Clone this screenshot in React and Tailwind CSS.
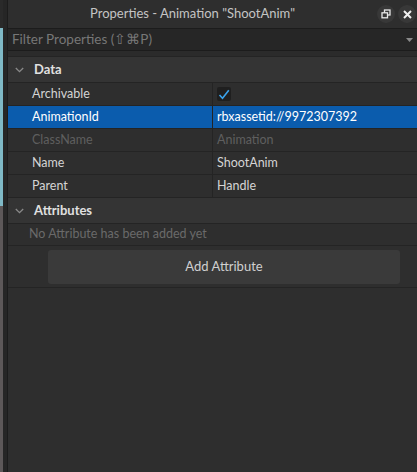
import React from "react";

const rows = [
  { name: "Archivable", check: true },
  { name: "AnimationId", value: "rbxassetid://9972307392", selected: true },
  { name: "ClassName", value: "Animation", disabled: true },
  { name: "Name", value: "ShootAnim" },
  { name: "Parent", value: "Handle" },
];

const Chevron = () => (
  <svg width="9" height="6" viewBox="0 0 9 6" className="ml-[7px] mr-[10px]">
    <path d="M0.8 1 L4.5 4.7 L8.2 1" stroke="#8a8a8a" strokeWidth="1.3" fill="none" />
  </svg>
);

const SectionHeader = ({ title }) => (
  <div className="flex h-[26px] items-center border-b border-[#242424] bg-[#343434]">
    <Chevron />
    <span className="text-[13px] font-bold text-[#e0e0e0]">{title}</span>
  </div>
);

const PropRow = ({ row }) => {
  const tone = row.disabled ? "text-[#5f5f5f]" : row.selected ? "text-white" : "text-[#d4d4d4]";
  return (
    <div
      className={
        "flex h-[23px] items-center border-b border-[#242424] text-[12.5px] " +
        (row.selected ? "bg-[#0b5cad]" : "bg-[#2e2e2e]")
      }
    >
      <div className={"flex h-full w-[204px] items-center pl-[24px] " + tone}>{row.name}</div>
      <div className="h-full w-px bg-[#242424]" />
      <div className={"flex h-full flex-1 items-center pl-[4px] " + tone}>
        {row.check ? (
          <div className="flex h-[14px] w-[14px] items-center justify-center rounded-[2px] bg-[#1f1f1f]">
            <svg width="12" height="11" viewBox="0 0 12 11">
              <path d="M1.5 6 L4.5 9.2 L10.8 1.2" stroke="#3aa3ec" strokeWidth="1.6" fill="none" />
            </svg>
          </div>
        ) : (
          row.value
        )}
      </div>
    </div>
  );
};

export default function App() {
  return (
    <div
      className="flex h-[472px] w-[417px] overflow-hidden bg-[#2e2e2e]"
      style={{ fontFamily: "Lato, 'Noto Sans', sans-serif" }}
    >
      <div className="flex w-[3px] flex-col">
        <div className="h-[28px] bg-[#2a2a2a]" />
        <div className="h-[178px] bg-[#7fb9c6]" />
        <div className="flex-1 bg-[#5d5859]" />
      </div>
      <div className="w-[4px] bg-[#262626]" />
      <div className="w-px bg-[#1c1c1c]" />
      <div className="flex flex-1 flex-col">
        <div className="relative flex h-[28px] items-center justify-center bg-[#2e2e2e] pr-[40px]">
          <span className="text-[13px] text-[#c4c4c4]">Properties - Animation "ShootAnim"</span>
          <div className="absolute right-[1px] top-[5px] flex items-center gap-[3px]">
            <div className="flex h-[18px] w-[18px] items-center justify-center rounded-full bg-[#383838]">
              <svg width="10" height="10" viewBox="0 0 10 10">
                <rect x="3.5" y="1" width="5.5" height="5" stroke="#e8e8e8" strokeWidth="1.3" fill="none" />
                <rect x="1" y="3.8" width="5.5" height="5" stroke="#e8e8e8" strokeWidth="1.3" fill="#383838" />
              </svg>
            </div>
            <div className="flex h-[18px] w-[18px] items-center justify-center rounded-full bg-[#383838]">
              <svg width="9" height="9" viewBox="0 0 9 9">
                <path d="M1 1 L8 8 M8 1 L1 8" stroke="#f0f0f0" strokeWidth="2" />
              </svg>
            </div>
          </div>
        </div>
        <div className="flex h-[23px] items-center justify-between border-y border-[#1c1c1c] bg-[#262626] pl-[4px] pr-[4px]">
          <span className="text-[13.5px] text-[#777777]">Filter Properties (⇧⌘P)</span>
          <svg width="7" height="4" viewBox="0 0 7 4">
            <path d="M0 0 L7 0 L3.5 4 Z" fill="#8a8a8a" />
          </svg>
        </div>
        <div className="h-[6px] border-b border-[#242424] bg-[#2b2b2b]" />
        <SectionHeader title="Data" />
        {rows.map((r) => (
          <PropRow key={r.name} row={r} />
        ))}
        <SectionHeader title="Attributes" />
        <div className="flex h-[22px] items-center border-b border-[#242424] pl-[21px] text-[12.5px] text-[#6a6a6a]">
          No Attribute has been added yet
        </div>
        <div className="flex h-[42px] items-center border-b border-[#242424] pl-[40px] pr-[17px]">
          <button className="flex h-[34px] flex-1 items-center justify-center rounded-[3px] bg-[#3a3a3a] text-[13px] text-[#d0d0d0]">
            Add Attribute
          </button>
        </div>
        <div className="flex-1" />
      </div>
    </div>
  );
}
